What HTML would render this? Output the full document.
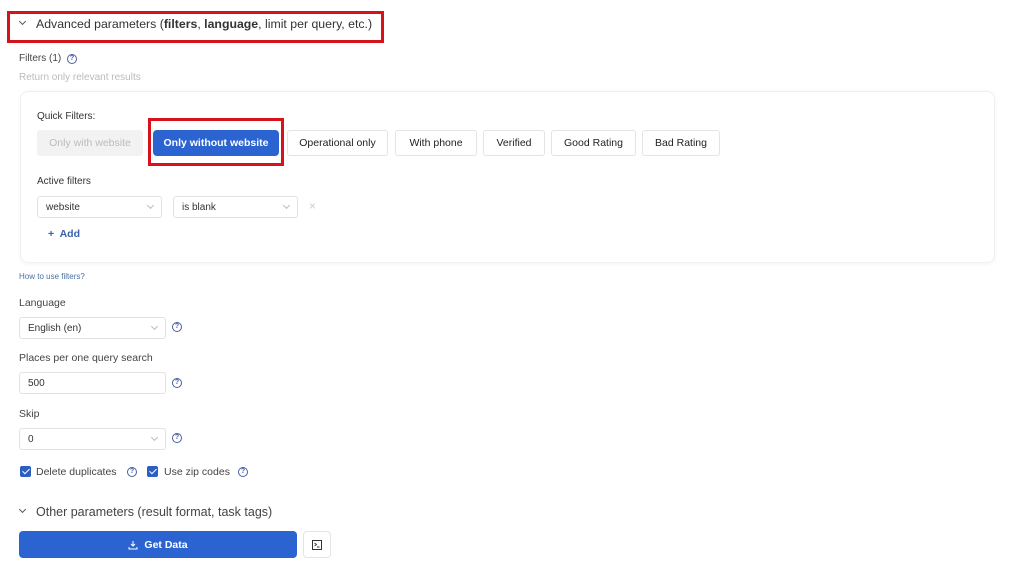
<!DOCTYPE html>
<html><head><meta charset="utf-8"><style>
*{box-sizing:border-box;margin:0;padding:0}
body{width:1024px;height:568px;background:#fff;font-family:"Liberation Sans",sans-serif;color:#333;position:relative;overflow:hidden}
.a{position:absolute;white-space:nowrap}
.red{position:absolute;border:3.5px solid #d8121c}
.btn{position:absolute;top:130px;height:26px;border:1px solid #e4e4e4;border-radius:3px;font-size:10.5px;color:#222;display:flex;align-items:center;justify-content:center;background:#fff}
.sel{position:absolute;height:22px;border:1px solid #e2e2e2;border-radius:3px;font-size:10px;color:#333;padding-left:8px;display:flex;align-items:center}
.chev{position:absolute;right:8px;top:6px;width:5px;height:5px;border-right:1px solid #bbb;border-bottom:1px solid #bbb;transform:rotate(45deg)}
.help{position:absolute;width:10px;height:10px;border:1.2px solid #4a5fa8;border-radius:50%;font-size:7px;color:#4a5fa8;text-align:center;line-height:8px;font-weight:bold}
.lbl{position:absolute;font-size:10.5px;color:#444}
.cb{position:absolute;width:11px;height:11px;background:#2b5fc4;border-radius:2px}
.cb:after{content:"";position:absolute;left:3.5px;top:1px;width:3px;height:6px;border-right:1.5px solid #fff;border-bottom:1.5px solid #fff;transform:rotate(45deg)}
.ch{position:absolute;width:5px;height:5px;border-right:1px solid #555;border-bottom:1px solid #555;transform:rotate(45deg)}
</style></head><body>
<div class="red" style="left:7px;top:11px;width:377px;height:32px"></div>
<div class="ch" style="left:20px;top:19px"></div>
<div class="a" style="left:36px;top:17px;font-size:12.3px;color:#333">Advanced parameters (<b>filters</b>, <b>language</b>, limit per query, etc.)</div>
<div class="lbl" style="left:19px;top:53px;font-size:10px">Filters (1)</div>
<div class="help" style="left:67px;top:54px">?</div>
<div class="a" style="left:19px;top:72px;font-size:10px;color:#bbb">Return only relevant results</div>
<div class="a" style="left:20px;top:91px;width:975px;height:172px;border:1px solid #f0f0f0;border-radius:8px;box-shadow:0 1px 4px rgba(0,0,0,.05)"></div>
<div class="lbl" style="left:37px;top:111px;font-size:10px;color:#333">Quick Filters:</div>
<div class="btn" style="left:37px;width:106px;background:#f2f2f2;border-color:#f2f2f2;color:#bbb">Only with website</div>
<div class="red" style="left:148px;top:118px;width:136px;height:48px"></div>
<div class="btn" style="left:153px;width:126px;background:#2b63d0;border-color:#2b63d0;color:#fff;font-weight:bold;border-radius:4px">Only without website</div>
<div class="btn" style="left:287px;width:101px">Operational only</div>
<div class="btn" style="left:395px;width:82px">With phone</div>
<div class="btn" style="left:483px;width:62px">Verified</div>
<div class="btn" style="left:551px;width:85px">Good Rating</div>
<div class="btn" style="left:642px;width:78px">Bad Rating</div>
<div class="lbl" style="left:37px;top:176px;font-size:10px;color:#333">Active filters</div>
<div class="sel" style="left:37px;top:196px;width:125px">website<span class="chev"></span></div>
<div class="sel" style="left:173px;top:196px;width:125px">is blank<span class="chev"></span></div>
<div class="a" style="left:309px;top:199px;font-size:12px;color:#ccc">×</div>
<div class="a" style="left:48px;top:228px;font-size:10.5px;color:#3a62a8;font-weight:bold">+&nbsp; Add</div>
<div class="a" style="left:19px;top:272px;font-size:8px;color:#4a6fa5">How to use filters?</div>
<div class="lbl" style="left:19px;top:297px">Language</div>
<div class="sel" style="left:19px;top:317px;width:147px">English (en)<span class="chev"></span></div>
<div class="help" style="left:172px;top:322px">?</div>
<div class="lbl" style="left:19px;top:352px">Places per one query search</div>
<div class="sel" style="left:19px;top:372px;width:147px">500</div>
<div class="help" style="left:172px;top:378px">?</div>
<div class="lbl" style="left:19px;top:408px">Skip</div>
<div class="sel" style="left:19px;top:428px;width:147px">0<span class="chev"></span></div>
<div class="help" style="left:172px;top:433px">?</div>
<div class="cb" style="left:20px;top:466px"></div>
<div class="lbl" style="left:36px;top:466px">Delete duplicates</div>
<div class="help" style="left:127px;top:467px">?</div>
<div class="cb" style="left:147px;top:466px"></div>
<div class="lbl" style="left:164px;top:466px">Use zip codes</div>
<div class="help" style="left:238px;top:467px">?</div>
<div class="ch" style="left:20px;top:507px"></div>
<div class="a" style="left:36px;top:505px;font-size:12.5px;color:#444">Other parameters (result format, task tags)</div>
<div class="a" style="left:19px;top:531px;width:278px;height:27px;background:#2b63d0;border-radius:4px;color:#fff;font-size:10.5px;font-weight:bold;display:flex;align-items:center;justify-content:center">
<svg width="10" height="10" viewBox="0 0 10 10" style="margin-right:6px"><path d="M5 1v5M3 4l2 2 2-2M1 7v2h8V7" fill="none" stroke="#fff" stroke-width="1"/></svg>Get Data</div>
<div class="a" style="left:303px;top:531px;width:28px;height:27px;border:1px solid #e4e4e4;border-radius:4px"><svg width="10" height="10" viewBox="0 0 10 10" style="position:absolute;left:8px;top:8px"><rect x="0.5" y="0.5" width="9" height="9" fill="none" stroke="#333" stroke-width="1"/><path d="M2.5 3l2 1.5-2 1.5M5 7h2.5" fill="none" stroke="#333" stroke-width="0.9"/></svg></div>
</body></html>
